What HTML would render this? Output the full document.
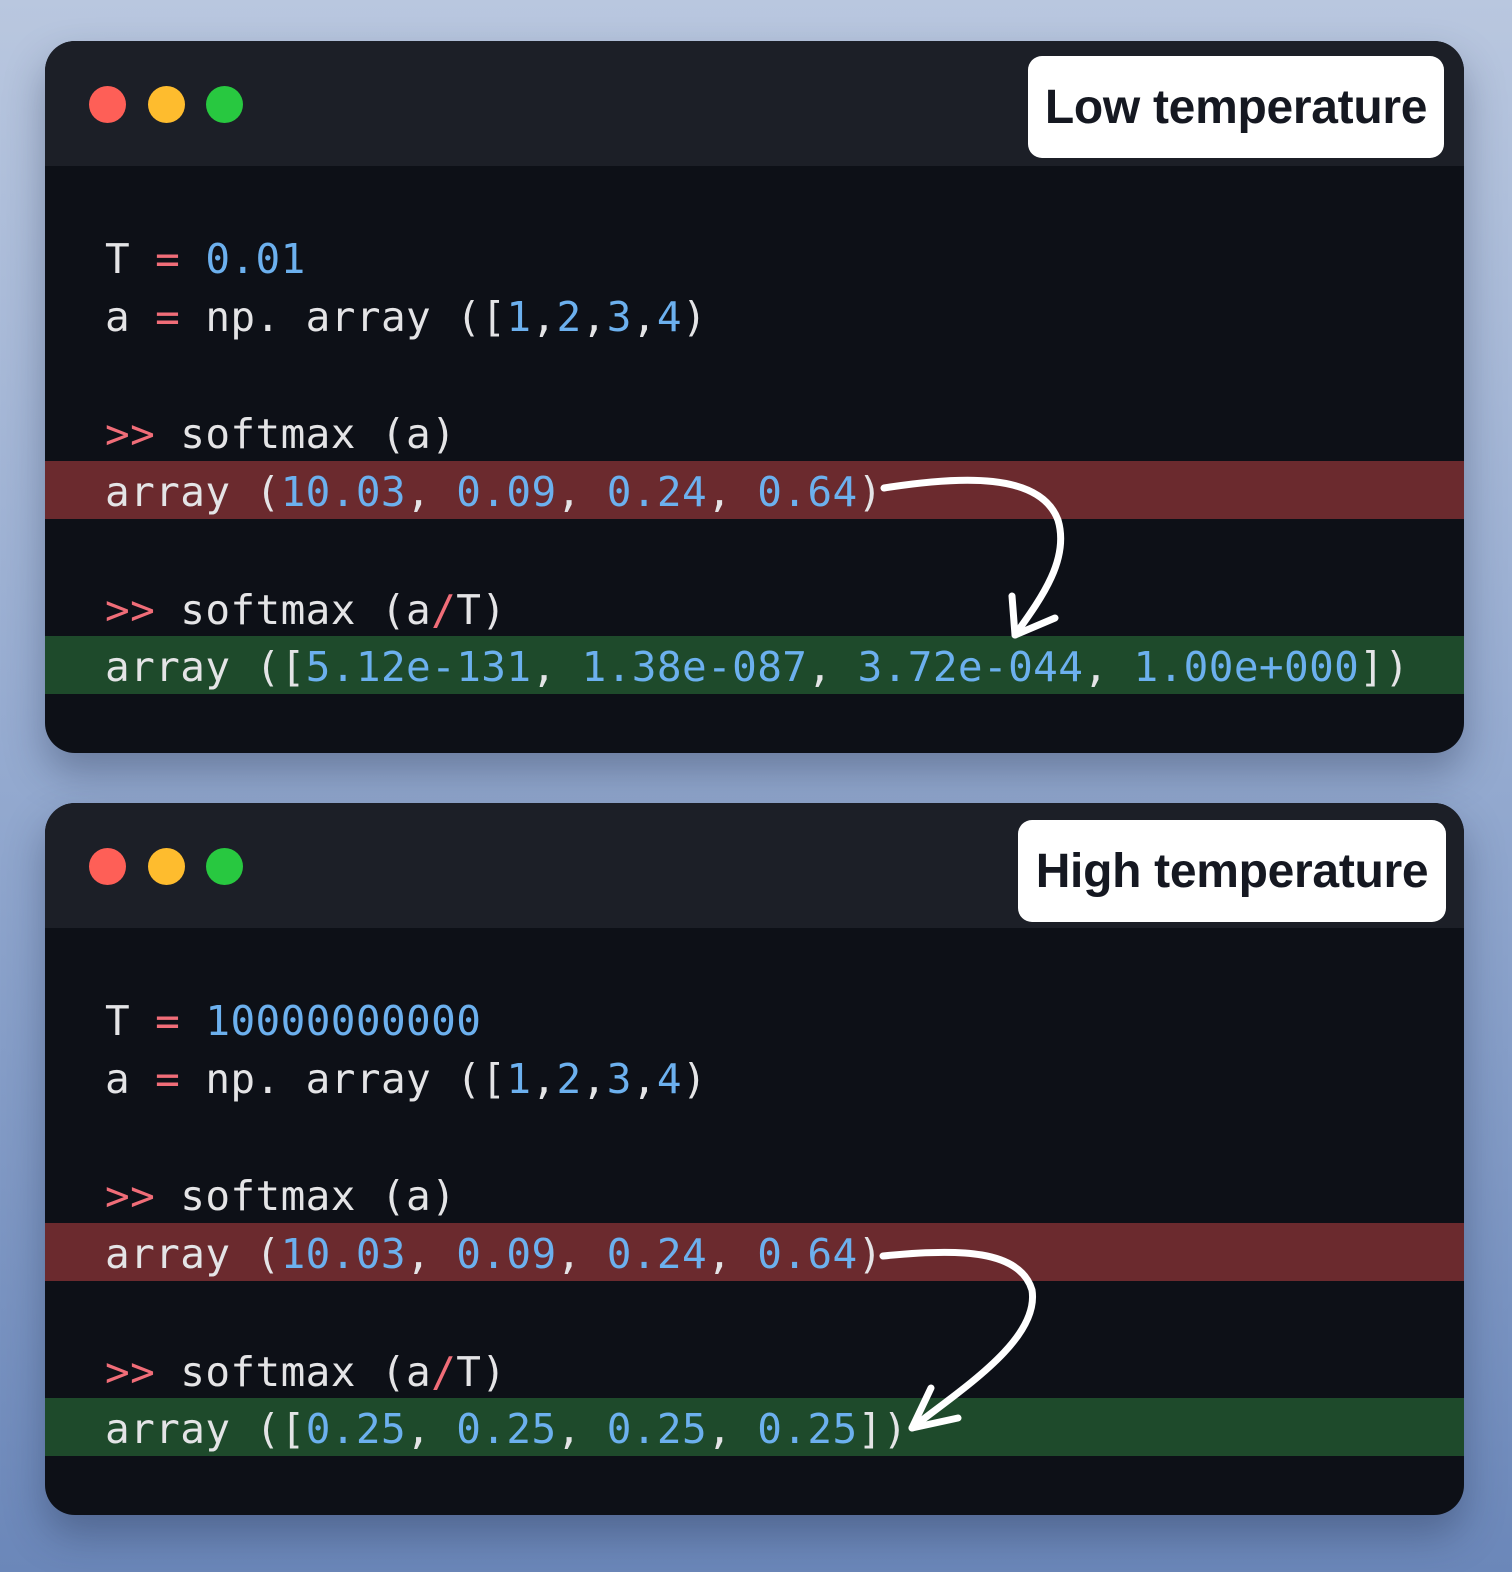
<!DOCTYPE html>
<html><head><meta charset="utf-8"><style>
*{margin:0;padding:0;box-sizing:border-box}
body{width:1512px;height:1572px;overflow:hidden;background:linear-gradient(180deg,#b9c7df 0%,#93a9cf 50%,#6b87b9 100%);position:relative;font-family:"DejaVu Sans Mono","Liberation Mono",monospace}
.win{position:absolute;left:45px;width:1419px;height:712px;border-radius:30px;background:#0d1017;overflow:hidden;box-shadow:0 20px 40px rgba(30,40,70,.35)}
.bar{position:absolute;left:0;top:0;width:100%;height:125px;background:#1c1f27}
.dot{position:absolute;top:45px;width:37px;height:37px;border-radius:50%}
.lbl{position:absolute;background:#fff;border-radius:14px;font-family:"Liberation Sans",sans-serif;font-weight:bold;font-size:48px;color:#151821;display:flex;align-items:center;justify-content:center;letter-spacing:-0.3px}
.ln{position:absolute;left:60px;height:58px;line-height:58px;font-size:41px;letter-spacing:0.4px;color:#e4e4e6;white-space:pre}
.row{position:absolute;left:0;width:100%;height:58px}
.b{color:#6cb0ee}.p{color:#f06d78}
svg{position:absolute;left:0;top:0}
</style></head><body>

<div class="win" style="top:41px">
 <div class="bar"></div>
 <div class="dot" style="left:44px;background:#fe5f57"></div>
 <div class="dot" style="left:103px;background:#febc2e"></div>
 <div class="dot" style="left:161px;background:#28c840"></div>
 <div class="lbl" style="left:983px;top:15px;width:416px;height:102px">Low temperature</div>
 <div class="row" style="top:420px;background:#6b2a2e"></div>
 <div class="row" style="top:595px;background:#1e4a2b"></div>
 <div class="ln" style="top:189px">T <span class="p">=</span> <span class="b">0.01</span></div>
 <div class="ln" style="top:247px">a <span class="p">=</span> np. array ([<span class="b">1</span>,<span class="b">2</span>,<span class="b">3</span>,<span class="b">4</span>)</div>
 <div class="ln" style="top:364px"><span class="p">&gt;&gt;</span> softmax (a)</div>
 <div class="ln" style="top:422px">array (<span class="b">10.03</span>, <span class="b">0.09</span>, <span class="b">0.24</span>, <span class="b">0.64</span>)</div>
 <div class="ln" style="top:540px"><span class="p">&gt;&gt;</span> softmax (a<span class="p">/</span>T)</div>
 <div class="ln" style="top:597px">array ([<span class="b">5.12e-131</span>, <span class="b">1.38e-087</span>, <span class="b">3.72e-044</span>, <span class="b">1.00e+000</span>])</div>
</div>

<div class="win" style="top:803px">
 <div class="bar"></div>
 <div class="dot" style="left:44px;background:#fe5f57"></div>
 <div class="dot" style="left:103px;background:#febc2e"></div>
 <div class="dot" style="left:161px;background:#28c840"></div>
 <div class="lbl" style="left:973px;top:17px;width:428px;height:102px">High temperature</div>
 <div class="row" style="top:420px;background:#6b2a2e"></div>
 <div class="row" style="top:595px;background:#1e4a2b"></div>
 <div class="ln" style="top:189px">T <span class="p">=</span> <span class="b">10000000000</span></div>
 <div class="ln" style="top:247px">a <span class="p">=</span> np. array ([<span class="b">1</span>,<span class="b">2</span>,<span class="b">3</span>,<span class="b">4</span>)</div>
 <div class="ln" style="top:364px"><span class="p">&gt;&gt;</span> softmax (a)</div>
 <div class="ln" style="top:422px">array (<span class="b">10.03</span>, <span class="b">0.09</span>, <span class="b">0.24</span>, <span class="b">0.64</span>)</div>
 <div class="ln" style="top:540px"><span class="p">&gt;&gt;</span> softmax (a<span class="p">/</span>T)</div>
 <div class="ln" style="top:597px">array ([<span class="b">0.25</span>, <span class="b">0.25</span>, <span class="b">0.25</span>, <span class="b">0.25</span>])</div>
</div>

<svg width="1512" height="1572" fill="none" stroke="#fff" stroke-width="7" stroke-linecap="round" stroke-linejoin="round">
 <path d="M884 488 C960 476 1040 472 1058 520 C1070 560 1040 600 1015 635"/>
 <path d="M1012 596 L1015 635 L1055 618"/>
 <path d="M883 1256 C960 1248 1020 1250 1032 1290 C1040 1340 960 1390 912 1428"/>
 <path d="M931 1388 L912 1428 L958 1418"/>
</svg>
</body></html>
